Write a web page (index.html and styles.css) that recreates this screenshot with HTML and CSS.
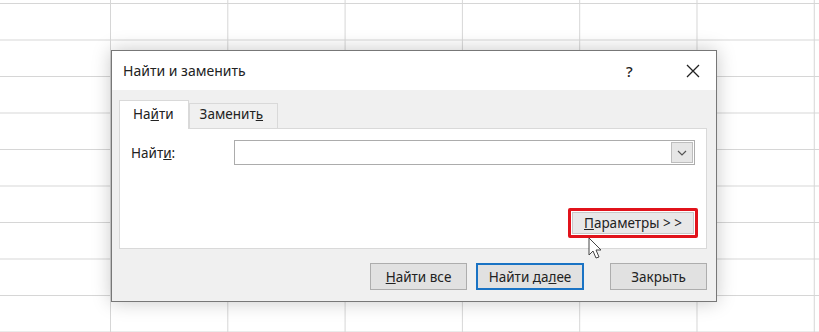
FILE: index.html
```html
<!DOCTYPE html>
<html lang="ru">
<head>
    <meta charset="UTF-8">
    <title>Найти и заменить</title>
    <link rel="stylesheet" href="styles.css">
</head>
<body>
    <section class="Sheet">
        <div class="Dialog">
            <div class="Title-Bar">
                <span class="Title">Найти и заменить</span>
                <span class="Help">?</span>
                <span class="Close">
                    <svg width="14" height="14" viewBox="0 0 14 14"><path d="M1 1L13 13M13 1L1 13" stroke="#222" stroke-width="1.3" fill="none"/></svg>
                </span>
            </div>
            <div class="Dialog-Body">
                <div class="Tabs">
                    <span class="Tab Active">На<u>й</u>ти</span>
                    <span class="Tab">Заменит<u>ь</u></span>
                </div>
                <div class="Panel">
                    <div class="Find-Row">
                        <label for="Find">Найт<u>и</u>:</label>
                        <div class="Combo">
                            <input type="text" id="Find">
                            <span class="Combo-Arrow">
                                <svg width="10" height="6" viewBox="0 0 10 6"><path d="M1 1L5 5L9 1" stroke="#555" stroke-width="1.2" fill="none"/></svg>
                            </span>
                        </div>
                    </div>
                    <div class="Options-Row">
                        <span class="Highlight">
                            <button class="Btn Options"><u>П</u>араметры &gt; &gt;</button>
                            <svg class="Cursor" width="16" height="24" viewBox="0 0 16 24"><path d="M1 1L1 18L5 14L8 21L11 20L8 13L13 13Z" fill="#fff" stroke="#444" stroke-width="1"/></svg>
                        </span>
                    </div>
                </div>
                <div class="Actions">
                    <button class="Btn"><u>Н</u>айти все</button>
                    <button class="Btn Default">Найти да<u>л</u>ее</button>
                    <button class="Btn Close-Btn">Закрыть</button>
                </div>
            </div>
        </div>
    </section>
</body>
</html>
```

FILE: styles.css
```css
*{
    box-sizing: border-box;
    padding: 0;
    margin: 0;
    font-family: "Noto Sans", "Open Sans", Arial, sans-serif;
}
body{
    width: 819px;
    height: 332px;
    overflow: hidden;
    background-color: #fff;
}
section.Sheet{
    width: 100%;
    height: 100%;
    padding: 50px 0 0 111px;
    background-image:
        linear-gradient(to right, #d6d6d6 1px, transparent 1px),
        linear-gradient(to bottom, #d6d6d6 1px, transparent 1px);
    background-size: 117.3px 36.5px;
    background-position: 110px 3px;
}
.Dialog{
    width: 606px;
    height: 252px;
    border: 1px solid #777;
    background-color: #f0f0f0;
    box-shadow: 0 0 18px rgba(0,0,0,0.22);
    display: flex;
    flex-direction: column;
}
.Title-Bar{
    height: 39px;
    background-color: #fff;
    display: flex;
    align-items: center;
    padding-left: 11px;
    color: #222;
}
.Title{
    font-size: 14px;
    flex: 1;
}
.Help{
    font-size: 15px;
    font-weight: 500;
    width: 20px;
    margin-right: 40px;
}
.Close{
    width: 30px;
    display: flex;
    align-items: center;
}
.Dialog-Body{
    flex: 1;
    padding: 10px 9px 0 7px;
    display: flex;
    flex-direction: column;
}
.Tabs{
    display: flex;
    align-items: flex-end;
    height: 28px;
    position: relative;
    z-index: 1;
}
.Tab{
    font-size: 13.5px;
    color: #222;
    border: 1px solid #d9d9d9;
    border-bottom: none;
    background-color: #f0f0f0;
    height: 25px;
    padding: 1px 14px 0 10px;
}
.Tab.Active{
    background-color: #fff;
    height: 29px;
    margin-bottom: -1px;
    padding: 4px 14px 0 13px;
}
.Panel{
    height: 121px;
    background-color: #fff;
    border: 1px solid #d9d9d9;
    padding: 11px 8px 10px 11px;
    display: flex;
    flex-direction: column;
    justify-content: space-between;
}
.Find-Row{
    display: flex;
    align-items: center;
}
.Find-Row label{
    font-size: 13.5px;
    color: #222;
    width: 103px;
}
.Combo{
    display: flex;
    width: 461px;
    height: 25px;
    border: 1px solid #acacac;
    padding: 1px;
}
.Combo input{
    flex: 1;
    border: none;
    outline: none;
}
.Combo-Arrow{
    width: 22px;
    background-color: #e6e6e6;
    border: 1px solid #bdbdbd;
    display: flex;
    align-items: center;
    justify-content: center;
}
.Options-Row{
    display: flex;
    justify-content: flex-end;
}
.Highlight{
    border: 3px solid #e1131b;
    border-radius: 2px;
    padding: 1px;
    position: relative;
}
.Btn{
    font-size: 13.5px;
    color: #222;
    background-color: #e1e1e1;
    border: 1px solid #adadad;
    height: 27px;
    cursor: pointer;
}
.Btn.Options{
    display: block;
    width: 122px;
    height: 22px;
    border: 1px solid #c8c8c8;
    background-color: #e8e8e8;
    padding-top: 0;
}
.Cursor{
    position: absolute;
    left: 17px;
    top: 26px;
}
.Actions{
    display: flex;
    justify-content: flex-end;
    margin-top: 14px;
}
.Actions .Btn{
    width: 97px;
    height: 27px;
    margin-left: 9px;
}
.Actions .Btn.Default{
    width: 108px;
    border: 2px solid #1a73c4;
}
.Actions .Btn.Close-Btn{
    margin-left: 26px;
}
```
